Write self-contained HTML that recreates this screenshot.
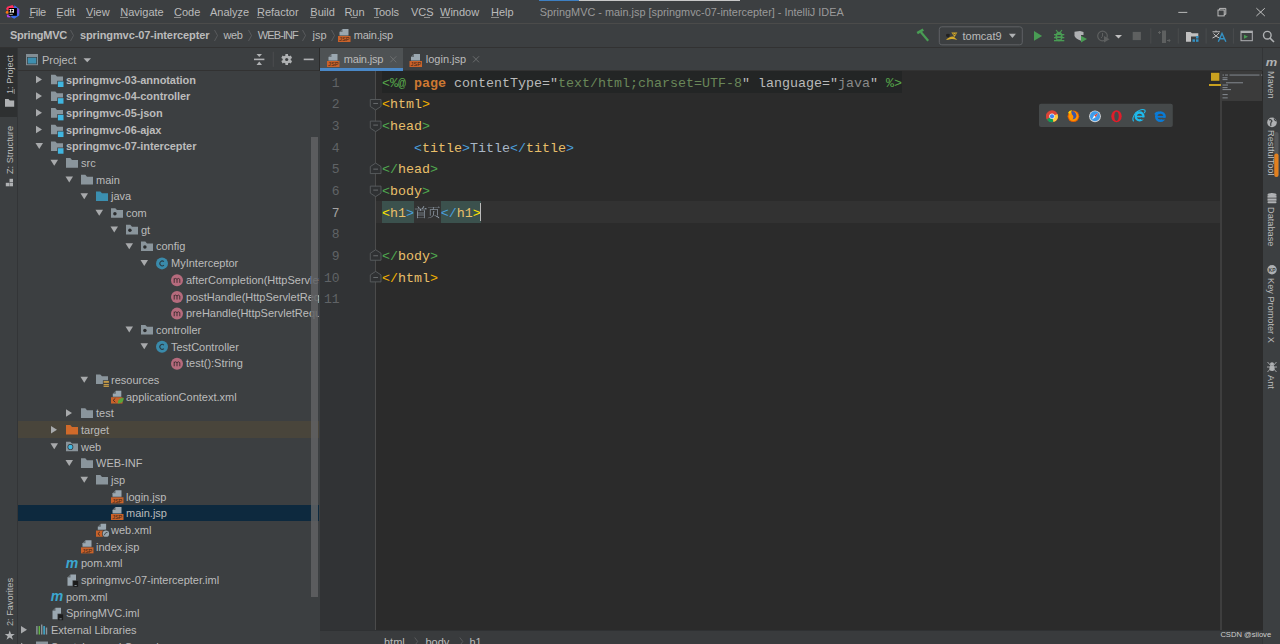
<!DOCTYPE html><html><head><meta charset="utf-8"><style>
*{margin:0;padding:0;box-sizing:border-box}
html,body{width:1280px;height:644px;overflow:hidden;background:#3c3f41;font-family:"Liberation Sans",sans-serif;font-size:11px;color:#bbbbbb}
.a{position:absolute;white-space:nowrap}
.t{position:absolute;white-space:nowrap;line-height:16.667px;height:16.667px;padding-top:0.6px}
.mono{font-family:"Liberation Mono",monospace;font-size:13.33px}
.cl{position:absolute;left:382px;white-space:pre;line-height:21.667px;height:21.667px;padding-top:1.8px;font-family:"Liberation Mono",monospace;font-size:13.33px}
.ln{position:absolute;left:320px;width:19.5px;text-align:right;line-height:21.667px;font-family:"Liberation Mono",monospace;font-size:13px;color:#606366;padding-top:1.6px}
.vt{position:absolute;white-space:nowrap;transform-origin:0 0;font-size:9.2px;line-height:10px;color:#bbbbbb}
</style></head><body>
<div class="a" style="left:0px;top:0px;width:1280px;height:23px;background:#3c3f41;"></div>
<div class="a" style="left:0px;top:23px;width:1280px;height:1px;background:#4b4b4a;"></div>
<div class="a" style="left:0px;top:24px;width:1280px;height:23px;background:#3c3f41;"></div>
<div class="a" style="left:0px;top:47px;width:1280px;height:1px;background:#323232;"></div>
<div class="a" style="left:0px;top:48px;width:18px;height:596px;background:#3c3f41;"></div>
<div class="a" style="left:0px;top:48px;width:17px;height:68.7px;background:#2e3031;"></div>
<div class="a" style="left:17px;top:48px;width:1px;height:596px;background:#333537;"></div>
<div class="a" style="left:18px;top:48px;width:301px;height:22px;background:#3c3f41;"></div>
<div class="a" style="left:18px;top:70px;width:301px;height:1px;background:#323232;"></div>
<div class="a" style="left:18px;top:71px;width:301px;height:573px;background:#3c3f41;"></div>
<div class="a" style="left:319px;top:48px;width:1px;height:23px;background:#2b2b2b;"></div>
<div class="a" style="left:320px;top:48px;width:943px;height:22px;background:#3c3f41;"></div>
<div class="a" style="left:320px;top:70px;width:943px;height:1px;background:#323232;"></div>
<div class="a" style="left:320px;top:48px;width:83px;height:20px;background:#4e5254;"></div>
<div class="a" style="left:320px;top:68px;width:83px;height:3px;background:#4a88c7;"></div>
<div class="a" style="left:320px;top:71px;width:56px;height:559px;background:#313335;"></div>
<div class="a" style="left:376px;top:71px;width:887px;height:559px;background:#2b2b2b;"></div>
<div class="a" style="left:375px;top:71px;width:1px;height:559px;background:#4b4b4b;"></div>
<div class="a" style="left:376px;top:201px;width:844.5px;height:21.667px;background:#323232;"></div>
<div class="a" style="left:382px;top:71px;width:520px;height:21.667px;background:#232525;"></div>
<div class="a" style="left:1220.4px;top:71px;width:1.3px;height:559px;background:#3e3e3e;"></div>
<div class="a" style="left:1222px;top:71px;width:40px;height:29.5px;background:#3b3b3b;"></div>
<div class="a" style="left:320px;top:630px;width:943px;height:14px;background:#393b3d;"></div>
<div class="a" style="left:320px;top:630px;width:943px;height:1px;background:#2f3133;"></div>
<div class="a" style="left:1263px;top:48px;width:17px;height:596px;background:#3c3f41;"></div>
<div class="a" style="left:1262px;top:48px;width:1px;height:23px;background:#333537;"></div>
<div class="a" style="left:1262px;top:630px;width:1px;height:14px;background:#333537;"></div>
<div class="a" style="left:18px;top:421.3469999999999px;width:301px;height:16.667px;background:#49453b;"></div>
<div class="a" style="left:18px;top:504.747px;width:301px;height:16.667px;background:#0d293e;"></div>
<div class="a" style="left:539px;top:0px;width:40px;height:1.2px;background:#3d7fc2;"></div>
<div class="a" style="left:579px;top:0px;width:161px;height:1.2px;background:#c8c8c8;"></div>
<div class="a" style="left:29.5px;top:0;height:23px;line-height:23px;padding-top:1px;letter-spacing:-0.35px">File</div>
<div class="a" style="left:56.3px;top:0;height:23px;line-height:23px;padding-top:1px;letter-spacing:0px">Edit</div>
<div class="a" style="left:86px;top:0;height:23px;line-height:23px;padding-top:1px;letter-spacing:0px">View</div>
<div class="a" style="left:120.3px;top:0;height:23px;line-height:23px;padding-top:1px;letter-spacing:0px">Navigate</div>
<div class="a" style="left:174px;top:0;height:23px;line-height:23px;padding-top:1px;letter-spacing:0px">Code</div>
<div class="a" style="left:210px;top:0;height:23px;line-height:23px;padding-top:1px;letter-spacing:0px">Analyze</div>
<div class="a" style="left:257px;top:0;height:23px;line-height:23px;padding-top:1px;letter-spacing:0px">Refactor</div>
<div class="a" style="left:310.3px;top:0;height:23px;line-height:23px;padding-top:1px;letter-spacing:0px">Build</div>
<div class="a" style="left:344.4px;top:0;height:23px;line-height:23px;padding-top:1px;letter-spacing:0px">Run</div>
<div class="a" style="left:373.4px;top:0;height:23px;line-height:23px;padding-top:1px;letter-spacing:0px">Tools</div>
<div class="a" style="left:411px;top:0;height:23px;line-height:23px;padding-top:1px;letter-spacing:0px">VCS</div>
<div class="a" style="left:440px;top:0;height:23px;line-height:23px;padding-top:1px;letter-spacing:0px">Window</div>
<div class="a" style="left:491px;top:0;height:23px;line-height:23px;padding-top:1px;letter-spacing:0px">Help</div>
<div class="a" style="left:539.7px;top:0;height:23px;line-height:23px;padding-top:1px;color:#9a9a9a;font-size:10.88px">SpringMVC - main.jsp [springmvc-07-intercepter] - IntelliJ IDEA</div>
<div class="a" style="left:29px;top:17px;width:5px;height:1px;background:#8e8e8e;"></div>
<div class="a" style="left:56.6px;top:17px;width:4.699999999999996px;height:1px;background:#8e8e8e;"></div>
<div class="a" style="left:86px;top:17px;width:7px;height:1px;background:#8e8e8e;"></div>
<div class="a" style="left:120.3px;top:17px;width:7.5px;height:1px;background:#8e8e8e;"></div>
<div class="a" style="left:173.9px;top:17px;width:7.099999999999994px;height:1px;background:#8e8e8e;"></div>
<div class="a" style="left:237.5px;top:17px;width:3.9000000000000057px;height:1px;background:#8e8e8e;"></div>
<div class="a" style="left:257px;top:17px;width:7px;height:1px;background:#8e8e8e;"></div>
<div class="a" style="left:310.3px;top:17px;width:6.0px;height:1px;background:#8e8e8e;"></div>
<div class="a" style="left:351px;top:17px;width:5.600000000000023px;height:1px;background:#8e8e8e;"></div>
<div class="a" style="left:373.5px;top:17px;width:5.5px;height:1px;background:#8e8e8e;"></div>
<div class="a" style="left:424px;top:17px;width:5.800000000000011px;height:1px;background:#8e8e8e;"></div>
<div class="a" style="left:440px;top:17px;width:10.399999999999977px;height:1px;background:#8e8e8e;"></div>
<div class="a" style="left:491px;top:17px;width:8px;height:1px;background:#8e8e8e;"></div>
<div class="a" style="left:10px;top:24px;height:23px;line-height:23px;letter-spacing:-0.25px;font-weight:bold;">SpringMVC</div>
<div class="a" style="left:80px;top:24px;height:23px;line-height:23px;letter-spacing:-0.11px;font-weight:bold;">springmvc-07-intercepter</div>
<div class="a" style="left:223.4px;top:24px;height:23px;line-height:23px;letter-spacing:-0.3px;">web</div>
<div class="a" style="left:257.8px;top:24px;height:23px;line-height:23px;letter-spacing:-0.9px;">WEB-INF</div>
<div class="a" style="left:312.5px;top:24px;height:23px;line-height:23px;letter-spacing:0px;">jsp</div>
<div class="a" style="left:353.8px;top:24px;height:23px;line-height:23px;letter-spacing:-0.25px;">main.jsp</div>
<div class="a" style="left:42px;top:48.5px;height:22px;line-height:22px">Project</div>
<div class="a" style="left:343.75px;top:49.3px;height:20px;line-height:20px;letter-spacing:-0.2px">main.jsp</div>
<div class="a" style="left:425.8px;top:49.3px;height:20px;line-height:20px">login.jsp</div>
<div class="a" style="left:18px;top:71px;width:301px;height:573px;overflow:hidden">
<div class="t" style="left:48px;top:0.07px;font-weight:bold;letter-spacing:-0.07px;">springmvc-03-annotation</div>
<div class="t" style="left:48px;top:16.75px;font-weight:bold;letter-spacing:-0.07px;">springmvc-04-controller</div>
<div class="t" style="left:48px;top:33.43px;font-weight:bold;letter-spacing:-0.07px;">springmvc-05-json</div>
<div class="t" style="left:48px;top:50.11px;font-weight:bold;letter-spacing:-0.07px;">springmvc-06-ajax</div>
<div class="t" style="left:48px;top:66.79px;font-weight:bold;letter-spacing:-0.07px;">springmvc-07-intercepter</div>
<div class="t" style="left:63px;top:83.47px;">src</div>
<div class="t" style="left:78px;top:100.15px;">main</div>
<div class="t" style="left:93px;top:116.83px;">java</div>
<div class="t" style="left:108px;top:133.51px;">com</div>
<div class="t" style="left:123px;top:150.19px;">gt</div>
<div class="t" style="left:138px;top:166.87px;">config</div>
<div class="t" style="left:153px;top:183.55px;">MyInterceptor</div>
<div class="t" style="left:168px;top:200.23px;">afterCompletion(HttpServletRequest, HttpServletResponse, Object, Exception):void</div>
<div class="t" style="left:168px;top:216.91px;">postHandle(HttpServletRequest, HttpServletResponse, Object, ModelAndView):void</div>
<div class="t" style="left:168px;top:233.59px;">preHandle(HttpServletRequest, HttpServletResponse, Object):boolean</div>
<div class="t" style="left:138px;top:250.27px;">controller</div>
<div class="t" style="left:153px;top:266.95px;">TestController</div>
<div class="t" style="left:168px;top:283.63px;">test():String</div>
<div class="t" style="left:93px;top:300.31px;">resources</div>
<div class="t" style="left:108px;top:316.99px;">applicationContext.xml</div>
<div class="t" style="left:78px;top:333.67px;">test</div>
<div class="t" style="left:63px;top:350.35px;">target</div>
<div class="t" style="left:63px;top:367.03px;">web</div>
<div class="t" style="left:78px;top:383.71px;">WEB-INF</div>
<div class="t" style="left:93px;top:400.39px;">jsp</div>
<div class="t" style="left:108px;top:417.07px;">login.jsp</div>
<div class="t" style="left:108px;top:433.75px;">main.jsp</div>
<div class="t" style="left:93px;top:450.43px;">web.xml</div>
<div class="t" style="left:78px;top:467.11px;">index.jsp</div>
<div class="t" style="left:63px;top:483.79px;">pom.xml</div>
<div class="t" style="left:63px;top:500.47px;">springmvc-07-intercepter.iml</div>
<div class="t" style="left:48px;top:517.15px;">pom.xml</div>
<div class="t" style="left:48px;top:533.83px;">SpringMVC.iml</div>
<div class="t" style="left:33px;top:550.51px;">External Libraries</div>
<div class="t" style="left:33px;top:567.19px;">Scratches and Consoles</div>
</div>
<div class="a" style="left:311px;top:136.8px;width:7px;height:460px;background:rgba(96,98,100,0.85);"></div>
<div class="ln" style="top:71.00px;color:#606366">1</div>
<div class="cl" style="top:71.00px"><span style="color:#57a64a;">&lt;%@</span> <span style="color:#cc7832;font-weight:bold">page</span> <span style="color:#bababa;">contentType</span><span style="color:#bababa;">="</span><span style="color:#6a8759;">text/html;charset=UTF-8</span><span style="color:#bababa;">"</span> <span style="color:#bababa;">language</span><span style="color:#bababa;">="</span><span style="color:#8a8a8a;">java</span><span style="color:#bababa;">"</span> <span style="color:#57a64a;">%&gt;</span></div>
<div class="ln" style="top:92.67px;color:#606366">2</div>
<div class="cl" style="top:92.67px"><span style="color:#f0b000;">&lt;</span><span style="color:#e8bf6a;">html</span><span style="color:#f0b000;">&gt;</span></div>
<div class="ln" style="top:114.33px;color:#606366">3</div>
<div class="cl" style="top:114.33px"><span style="color:#4fa84f;">&lt;</span><span style="color:#e8bf6a;">head</span><span style="color:#4fa84f;">&gt;</span></div>
<div class="ln" style="top:136.00px;color:#606366">4</div>
<div class="cl" style="top:136.00px">    <span style="color:#4a9eda;">&lt;</span><span style="color:#e8bf6a;">title</span><span style="color:#4a9eda;">&gt;</span><span style="color:#a9b7c6;">Title</span><span style="color:#4a9eda;">&lt;/</span><span style="color:#e8bf6a;">title</span><span style="color:#4a9eda;">&gt;</span></div>
<div class="ln" style="top:157.67px;color:#606366">5</div>
<div class="cl" style="top:157.67px"><span style="color:#4fa84f;">&lt;/</span><span style="color:#e8bf6a;">head</span><span style="color:#4fa84f;">&gt;</span></div>
<div class="ln" style="top:179.34px;color:#606366">6</div>
<div class="cl" style="top:179.34px"><span style="color:#4fa84f;">&lt;</span><span style="color:#e8bf6a;">body</span><span style="color:#4fa84f;">&gt;</span></div>
<div class="ln" style="top:201.00px;color:#a4a3a3">7</div>
<div class="a" style="left:382px;top:201.002px;width:32px;height:21.667px;background:#3b514d;"></div>
<div class="a" style="left:440.8px;top:201.002px;width:40px;height:21.667px;background:#3b514d;"></div>
<div class="cl" style="top:201.00px"><span style="color:#ffe500;">&lt;</span><span style="color:#e8bf6a;">h1</span><span style="color:#4a9eda;">&gt;</span></div>
<div class="cl" style="left:440.8px;top:201.00px"><span style="color:#4a9eda;">&lt;/</span><span style="color:#e8bf6a;">h1</span><span style="color:#ffe500;">&gt;</span></div>
<div class="a" style="left:480.3px;top:203.002px;width:1.2px;height:18px;background:#bbbbbb;"></div>
<div class="ln" style="top:222.67px;color:#606366">8</div>
<div class="ln" style="top:244.34px;color:#606366">9</div>
<div class="cl" style="top:244.34px"><span style="color:#4fa84f;">&lt;/</span><span style="color:#e8bf6a;">body</span><span style="color:#4fa84f;">&gt;</span></div>
<div class="ln" style="top:266.00px;color:#606366">10</div>
<div class="cl" style="top:266.00px"><span style="color:#f0b000;">&lt;/</span><span style="color:#e8bf6a;">html</span><span style="color:#f0b000;">&gt;</span></div>
<div class="ln" style="top:287.67px;color:#606366">11</div>
<div class="a" style="left:384px;top:632.5px;height:14px;line-height:18px;color:#bbbbbb">html</div>
<div class="a" style="left:425.5px;top:632.5px;height:14px;line-height:18px;color:#bbbbbb">body</div>
<div class="a" style="left:469.5px;top:632.5px;height:14px;line-height:18px;color:#bbbbbb">h1</div>
<div class="a" style="left:1220.4px;top:630px;font-size:7.6px;line-height:9px;color:#cfcfcf">CSDN @siiove</div>
<div class="a" style="left:962.5px;top:25px;height:23px;line-height:23px">tomcat9</div>
<div class="vt" style="left:4.8px;top:93.5px;transform:rotate(-90deg)">1: Project</div>
<div class="vt" style="left:4.8px;top:173.8px;transform:rotate(-90deg)">Z: Structure</div>
<div class="vt" style="left:4.8px;top:626.1px;transform:rotate(-90deg)">2: Favorites</div>
<div class="vt" style="left:1275.6px;top:70.5px;transform:rotate(90deg)">Maven</div>
<div class="vt" style="left:1275.6px;top:129.8px;transform:rotate(90deg)">RestfulTool</div>
<div class="vt" style="left:1275.6px;top:206.8px;transform:rotate(90deg)">Database</div>
<div class="vt" style="left:1275.6px;top:278px;transform:rotate(90deg)">Key Promoter X</div>
<div class="vt" style="left:1275.6px;top:374.7px;transform:rotate(90deg)">Ant</div>
<svg class="a" style="left:0;top:0" width="1280" height="644" viewBox="0 0 1280 644">
<g>
<path d="M7.2,6.8 L12.5,5 L14.3,7.5 L13.5,9.5 L7.5,10.5 L6,9 Z" fill="#fe315d"/>
<path d="M14.5,5.2 L19.2,9 L19.2,15.5 L14.2,18.8 L11,17 L12.5,13 Z" fill="#3b6cf0"/>
<path d="M17,8 L19.2,9.5 L19.2,14 L17,13 Z" fill="#7b4fd6"/>
<circle cx="7.3" cy="12.3" r="1.5" fill="#f97a12"/>
<path d="M6.8,15 L9.5,14 L10.5,17.5 L7.3,17.2 Z" fill="#b345f1"/>
<rect x="8.7" y="8" width="8.2" height="7.8" fill="#000"/>
<g fill="#f0f0f0"><rect x="9.4" y="9" width="2.3" height="0.9"/><rect x="10.1" y="9" width="0.9" height="3.4"/><rect x="9.4" y="11.6" width="2.3" height="0.9"/><rect x="12" y="9" width="2" height="0.9"/><rect x="13.1" y="9" width="0.9" height="3.5"/><rect x="11.9" y="11.6" width="2.1" height="0.9"/><rect x="11.9" y="10.9" width="0.8" height="1.3"/></g>
<rect x="9.4" y="13.9" width="3.4" height="0.8" fill="#d0d0d0"/>
</g>
<rect x="1178.3" y="11.9" width="9" height="0.9" fill="#c8c8c8"/>
<rect x="1218" y="10" width="6.2" height="5.9" fill="none" stroke="#c8c8c8" stroke-width="0.9"/><path d="M1219.6,10 V8.4 H1225.8 V14.3 H1224.2" fill="none" stroke="#c8c8c8" stroke-width="0.9"/>
<path d="M1256.4,8.2 L1264.8,16 M1264.8,8.2 L1256.4,16" stroke="#c8c8c8" stroke-width="0.95"/>
<path d="M70.5,30 L73.5,35.5 L70.5,41" fill="none" stroke="#5f6163" stroke-width="0.8"/>
<path d="M214.5,30 L217.5,35.5 L214.5,41" fill="none" stroke="#5f6163" stroke-width="0.8"/>
<path d="M248.5,30 L251.5,35.5 L248.5,41" fill="none" stroke="#5f6163" stroke-width="0.8"/>
<path d="M302.5,30 L305.5,35.5 L302.5,41" fill="none" stroke="#5f6163" stroke-width="0.8"/>
<path d="M331.5,30 L334.5,35.5 L331.5,41" fill="none" stroke="#5f6163" stroke-width="0.8"/>
<path d="M414.7,637.5 L417.7,641.5 L414.7,645.5" fill="none" stroke="#5f6163" stroke-width="0.8"/>
<path d="M459.8,637.5 L462.8,641.5 L459.8,645.5" fill="none" stroke="#5f6163" stroke-width="0.8"/>
<path d="M342.5,29 H348.5 V35.6 H339.5 V32 Z" fill="#9aa7b0"/><path d="M342.5,29 V32 H339.5 Z" fill="#3c3f41" opacity="0.55"/>
<rect x="338" y="36" width="12.5" height="6" fill="#c9622a"/>
<text x="344.25" y="41.3" font-family="Liberation Sans" font-size="5.6" text-anchor="middle" fill="#3a2418">JSP</text>
<path d="M331.5,54 H337.5 V60.6 H328.5 V57 Z" fill="#9aa7b0"/><path d="M331.5,54 V57 H328.5 Z" fill="#3c3f41" opacity="0.55"/>
<rect x="327" y="61" width="12.5" height="6" fill="#c9622a"/>
<text x="333.25" y="66.3" font-family="Liberation Sans" font-size="5.6" text-anchor="middle" fill="#3a2418">JSP</text>
<path d="M414.0,54 H420.0 V60.6 H411.0 V57 Z" fill="#9aa7b0"/><path d="M414.0,54 V57 H411.0 Z" fill="#3c3f41" opacity="0.55"/>
<rect x="409.5" y="61" width="12.5" height="6" fill="#c9622a"/>
<text x="415.75" y="66.3" font-family="Liberation Sans" font-size="5.6" text-anchor="middle" fill="#3a2418">JSP</text>
<path d="M390.3,56.3 L396.3,62.3 M396.3,56.3 L390.3,62.3" stroke="#6e7072" stroke-width="0.9"/>
<path d="M473,56.3 L479,62.3 M479,56.3 L473,62.3" stroke="#6e7072" stroke-width="0.9"/>
<rect x="26" y="54" width="12" height="11.2" fill="#838e95"/><rect x="27" y="57" width="10" height="7.2" fill="#3c3f41"/><rect x="27.7" y="57.6" width="8.6" height="6" fill="#3e8fb0"/>
<path d="M83.5,58.3 L91,58.3 L87.25,62.3 Z" fill="#afb1b3"/>
<path d="M256.5,54 L262,54 L259.25,57 Z M256.5,64.9 L262,64.9 L259.25,61.4 Z" fill="#afb1b3"/><rect x="254" y="58.6" width="10.4" height="1.6" fill="#afb1b3"/>
<rect x="272.8" y="51.8" width="1" height="15" fill="#4b4d4f"/>
<g transform="translate(286.7,59.5)"><circle r="4" fill="#afb1b3"/>
<rect x="-1.3" y="-5.5" width="2.6" height="3" fill="#afb1b3" transform="rotate(0)"/>
<rect x="-1.3" y="-5.5" width="2.6" height="3" fill="#afb1b3" transform="rotate(60)"/>
<rect x="-1.3" y="-5.5" width="2.6" height="3" fill="#afb1b3" transform="rotate(120)"/>
<rect x="-1.3" y="-5.5" width="2.6" height="3" fill="#afb1b3" transform="rotate(180)"/>
<rect x="-1.3" y="-5.5" width="2.6" height="3" fill="#afb1b3" transform="rotate(240)"/>
<rect x="-1.3" y="-5.5" width="2.6" height="3" fill="#afb1b3" transform="rotate(300)"/>
<circle r="1.6" fill="#3c3f41"/></g>
<rect x="303.7" y="58.6" width="10" height="1.6" fill="#afb1b3"/>
<path d="M917.2,33.2 L923.3,29.6" stroke="#499c54" stroke-width="2.6" stroke-linecap="butt"/><path d="M920.8,32 L928.2,40.8" stroke="#499c54" stroke-width="2.2"/>
<rect x="939.3" y="26.8" width="83" height="18" rx="2.5" fill="none" stroke="#5e6164" stroke-width="1"/>
<path d="M946,34.5 Q948,33 950,34.5 L949,37.5 Q947,37.5 946,36 Z" fill="#222"/><path d="M946,40 Q949,36.2 953.5,36.5 L957.3,40 Q953,38.6 950,39.2 Q948,39.8 946,40 Z" fill="#d6ac2b"/><path d="M951.3,32.4 L957.4,32.4 L954.6,37 Z" fill="#d6ac2b"/><path d="M953,33.3 L954.5,35 L956,33.3" stroke="#333" stroke-width="0.7" fill="none"/>
<path d="M1008.9,33.8 L1015.9,33.8 L1012.4,38 Z" fill="#afb1b3"/>
<path d="M1034,31.1 L1042.1,36 L1034,40.8 Z" fill="#499c54"/>
<g fill="#499c54"><ellipse cx="1059" cy="36.5" rx="3.6" ry="4.8"/><rect x="1054" y="34" width="10.3" height="1.3"/><rect x="1054" y="37" width="10.3" height="1.3"/><rect x="1054" y="40" width="10.3" height="1.3"/><path d="M1056,30 L1058,32.5 M1062,30 L1060,32.5" stroke="#499c54" stroke-width="1.2"/></g><rect x="1057.3" y="35" width="3.4" height="1.3" fill="#3c3f41"/><rect x="1057.3" y="38" width="3.4" height="1.3" fill="#3c3f41"/>
<path d="M1074.5,31.8 L1080,31 L1083.5,32 L1083.5,35 L1081,35 L1081,40.8 Q1076,39 1074.5,36 Z" fill="#afb1b3"/><path d="M1081,35.8 L1087,39.1 L1081,42.4 Z" fill="#499c54"/>
<circle cx="1102.5" cy="36" r="4.8" fill="none" stroke="#5e6060" stroke-width="1.2"/><path d="M1102.5,33 V36.3 L1101,38" stroke="#5e6060" stroke-width="1" fill="none"/><path d="M1104,36 L1109.6,39.2 L1104,42.4 Z" fill="#5e6060"/>
<path d="M1115,35 L1122,35 L1118.5,38.5 Z" fill="#c0c0c0"/>
<rect x="1132.7" y="31.9" width="8.2" height="8.2" fill="#5e6060"/>
<rect x="1150.3" y="28.3" width="1" height="15.3" fill="#4a4c4e"/>
<rect x="1177.8" y="28.3" width="1" height="15.3" fill="#4a4c4e"/>
<rect x="1205.6" y="28.3" width="1" height="15.3" fill="#4a4c4e"/>
<rect x="1232.9" y="28.3" width="1" height="15.3" fill="#4a4c4e"/>
<rect x="1162" y="30.5" width="4" height="12.5" fill="#5e6060"/><path d="M1158,32.5 H1161 M1159.5,31 V34 M1167,40.5 H1170 L1168.8,39 M1170,40.5 L1168.8,42" stroke="#5e6060" stroke-width="1" fill="none"/>
<path d="M1186,31.9 H1190.5 L1192,33.3 H1198.3 V41.8 H1186 Z" fill="#c0c0c0"/><rect x="1191" y="36.5" width="8" height="6" fill="#3c3f41"/><g fill="#3592c4"><rect x="1196" y="36" width="2.5" height="2.5"/><rect x="1192.5" y="39.3" width="2.5" height="2.5"/><rect x="1196" y="39.3" width="2.5" height="2.5"/></g>
<path d="M1212.5,31.8 H1220 M1216,30.5 V31.8 M1213.5,33.5 Q1216,37 1219.5,38 M1219,33 Q1216,37 1212.5,38" stroke="#c0c0c0" stroke-width="1" fill="none"/>
<path d="M1218.3,41.8 L1222,33.5 L1225.9,41.8 M1219.8,38.8 H1224.3" stroke="#3592c4" stroke-width="1.4" fill="none"/>
<rect x="1241" y="31.2" width="11.3" height="9.5" fill="none" stroke="#afb1b3" stroke-width="1"/><rect x="1241" y="31.2" width="11.3" height="1.8" fill="#afb1b3"/><path d="M1244,34.8 L1248,36.8 L1244,38.8 Z" fill="#499c54"/>
<circle cx="1267.3" cy="35.2" r="3.8" fill="none" stroke="#afb1b3" stroke-width="1.4"/><path d="M1270,38 L1274,42" stroke="#afb1b3" stroke-width="1.6"/>
<rect x="13.8" y="89" width="0.9" height="5" fill="#8e8e8e"/>
<path d="M5,99 H8.5 L9.8,100.5 H14.2 V106.8 H5 Z" fill="#afb1b3"/>
<g fill="#afb1b3"><rect x="9.5" y="178.8" width="3.5" height="3.5"/><rect x="5.8" y="182.8" width="3.5" height="3.5"/><rect x="9.5" y="182.8" width="3.5" height="3.5"/></g>
<path d="M9.75,630.5 L11,634 L14.8,634 L11.8,636.2 L13,639.8 L9.75,637.6 L6.5,639.8 L7.7,636.2 L4.7,634 L8.5,634 Z" fill="#afb1b3"/>
<text x="1265.8" y="65.5" font-family="Liberation Sans" font-size="11.5" font-weight="bold" font-style="italic" fill="#afb1b3" textLength="11.5" lengthAdjust="spacingAndGlyphs">m</text>
<circle cx="1272" cy="122.4" r="4.8" fill="#afb1b3"/><path d="M1269,120 Q1271,119 1272,121 Q1270,123 1271,126 M1274,118.5 Q1275,121 1276.5,121" stroke="#3c3f41" stroke-width="1.1" fill="none"/>
<rect x="1274.3" y="132" width="4.2" height="45" rx="2" fill="#555759"/><rect x="1274.3" y="153.4" width="4.2" height="23.6" rx="2" fill="#e1801f"/>
<g fill="#afb1b3"><ellipse cx="1272" cy="194.5" rx="4.5" ry="1.6"/><rect x="1267.5" y="195.5" width="9" height="2.2"/><rect x="1267.5" y="198.5" width="9" height="2.2"/><rect x="1267.5" y="201.3" width="9" height="1.9" rx="0.9"/></g>
<circle cx="1272" cy="269.8" r="4.7" fill="#afb1b3"/><text x="1272" y="272" font-family="Liberation Sans" font-size="5" font-weight="bold" text-anchor="middle" fill="#3c3f41">KP</text>
<g fill="#afb1b3"><ellipse cx="1272" cy="364" rx="2" ry="1.8"/><ellipse cx="1272" cy="368.3" rx="2.6" ry="2.8"/><path d="M1267.5,362 L1276.5,372 M1276.5,362 L1267.5,372 M1267,367 H1277" stroke="#afb1b3" stroke-width="0.9"/></g>
<path d="M370.3,99.467 H381.0 V106.467 L375.65000000000003,109.967 L370.3,106.467 Z" fill="#2f3133" stroke="#5a5d60" stroke-width="0.9"/><rect x="373.3" y="102.967" width="4.7" height="0.9" fill="#6e7173"/>
<path d="M370.3,121.134 H381.0 V128.13400000000001 L375.65000000000003,131.63400000000001 L370.3,128.13400000000001 Z" fill="#2f3133" stroke="#5a5d60" stroke-width="0.9"/><rect x="373.3" y="124.634" width="4.7" height="0.9" fill="#6e7173"/>
<path d="M370.3,173.568 H381.0 V166.568 L375.65000000000003,163.068 L370.3,166.568 Z" fill="#2f3133" stroke="#5a5d60" stroke-width="0.9"/><rect x="373.3" y="168.668" width="4.7" height="0.9" fill="#6e7173"/>
<path d="M370.3,186.13500000000002 H381.0 V193.13500000000002 L375.65000000000003,196.63500000000002 L370.3,193.13500000000002 Z" fill="#2f3133" stroke="#5a5d60" stroke-width="0.9"/><rect x="373.3" y="189.63500000000002" width="4.7" height="0.9" fill="#6e7173"/>
<path d="M370.3,260.236 H381.0 V253.23600000000002 L375.65000000000003,249.73600000000002 L370.3,253.23600000000002 Z" fill="#2f3133" stroke="#5a5d60" stroke-width="0.9"/><rect x="373.3" y="255.336" width="4.7" height="0.9" fill="#6e7173"/>
<path d="M370.3,281.9030000000001 H381.0 V274.9030000000001 L375.65000000000003,271.4030000000001 L370.3,274.9030000000001 Z" fill="#2f3133" stroke="#5a5d60" stroke-width="0.9"/><rect x="373.3" y="277.0030000000001" width="4.7" height="0.9" fill="#6e7173"/>
<rect x="1211" y="72.8" width="8.4" height="8" fill="#c9a11f"/>
<rect x="1209" y="84" width="12" height="2" fill="#c9a11f"/>
<rect x="1222.5" y="74.5" width="1.5" height="1.1" fill="#7d8288"/>
<rect x="1225" y="74.5" width="3" height="1.1" fill="#7d8288"/>
<rect x="1229.5" y="74.5" width="30" height="1.1" fill="#7d8288"/>
<rect x="1261" y="74.5" width="1.2" height="1.1" fill="#7d8288"/>
<rect x="1222.5" y="77.2" width="5" height="1.1" fill="#7d8288"/>
<rect x="1222.5" y="79" width="5" height="1.1" fill="#7d8288"/>
<rect x="1226" y="82.2" width="17" height="1.1" fill="#7d8288"/>
<rect x="1222.5" y="84.5" width="5.5" height="1.1" fill="#7d8288"/>
<rect x="1222.5" y="87" width="5" height="1.1" fill="#7d8288"/>
<rect x="1222.5" y="89" width="8.5" height="1.1" fill="#7d8288"/>
<rect x="1222.5" y="94" width="5.2" height="1.1" fill="#7d8288"/>
<rect x="1222.5" y="97.3" width="5.2" height="1.1" fill="#7d8288"/>
<rect x="1039" y="103.8" width="133.8" height="23.1" rx="2" fill="#45494a"/>
<circle cx="1052" cy="116.3" r="6" fill="#db4437"/><path d="M1052,116.3 L1046.8,119.3 A6,6 0 0 1 1046.8,113.3 Z" fill="#db4437"/><path d="M1052,116.3 L1046.8,119.3 A6,6 0 0 0 1053.5,122.1 Z" fill="#0f9d58"/><path d="M1052,116.3 L1053.5,122.1 A6,6 0 0 0 1057.5,113.89999999999999 Z" fill="#ffcd40"/><circle cx="1052" cy="116.3" r="2.7" fill="#f1f1f1"/><circle cx="1052" cy="116.3" r="2.1" fill="#4285f4"/>
<circle cx="1073.4" cy="116.3" r="5.8" fill="#e66000"/><circle cx="1073.4" cy="116.3" r="4.8" fill="#ff9500"/><path d="M1071,111 Q1076,111 1076.5,116 Q1076,119 1072.5,119.5 Q1074.5,116.5 1072,114.5 Z" fill="#3a55a8"/><path d="M1068,113 Q1069,110 1072,110.2 L1070,114 Z" fill="#ffcb00"/>
<circle cx="1095" cy="116.3" r="5.9" fill="#d0d4d8"/><circle cx="1095" cy="116.3" r="5" fill="#3d9ae8"/><path d="M1098,113 L1095.8,117 L1092,119.5 L1094.2,115.6 Z" fill="#fff"/><path d="M1098,113 L1094.2,115.6 L1095.8,117 Z" fill="#e63b2e"/>
<ellipse cx="1116.5" cy="116.3" rx="5.2" ry="6" fill="#e11d2a"/><ellipse cx="1116.5" cy="116.3" rx="2.2" ry="4.6" fill="#45494a"/>
<circle cx="1139.6" cy="116.4" r="3.9" stroke="#1ebbee" stroke-width="2.3" fill="none"/><rect x="1135.6" y="115.7" width="8.2" height="1.7" fill="#1ebbee"/><path d="M1141,117.5 L1146,117.5 L1146,119.6 L1141,119.6 Z" fill="#45494a"/><path d="M1133.6,121.3 Q1131.5,118.5 1135.5,113 Q1141.5,108 1145,110.2 Q1145.8,111.5 1144,113" stroke="#1ebbee" stroke-width="1.1" fill="none"/>
<circle cx="1160.4" cy="116.6" r="4.2" stroke="#0a7bd6" stroke-width="2.5" fill="none"/><rect x="1156.2" y="115.9" width="8.5" height="1.8" fill="#0a7bd6"/><path d="M1162,117.9 L1166.5,117.9 L1166.5,119.6 L1162,119.6 Z" fill="#45494a"/><path d="M1154.9,114.5 Q1156.5,112 1159,112.5" stroke="#0a7bd6" stroke-width="1.6" fill="none"/>
<path d="M36,75.65 L42,79.4 L36,83.15 Z" fill="#a8aaac"/>
<path d="M51,74.7 H55.3 L57,76.60000000000001 H63 V84.30000000000001 H51 Z" fill="#8a959c"/>
<rect x="57.2" y="80.80000000000001" width="7" height="7" fill="#3c3f41"/>
<rect x="57.9" y="81.5" width="5.6" height="5.5" fill="#40b6e0"/>
<path d="M36,92.33000000000001 L42,96.08000000000001 L36,99.83000000000001 Z" fill="#a8aaac"/>
<path d="M51,91.38000000000001 H55.3 L57,93.28000000000002 H63 V100.98000000000002 H51 Z" fill="#8a959c"/>
<rect x="57.2" y="97.48000000000002" width="7" height="7" fill="#3c3f41"/>
<rect x="57.9" y="98.18" width="5.6" height="5.5" fill="#40b6e0"/>
<path d="M36,109.01 L42,112.76 L36,116.51 Z" fill="#a8aaac"/>
<path d="M51,108.06 H55.3 L57,109.96000000000001 H63 V117.66000000000001 H51 Z" fill="#8a959c"/>
<rect x="57.2" y="114.16000000000001" width="7" height="7" fill="#3c3f41"/>
<rect x="57.9" y="114.86" width="5.6" height="5.5" fill="#40b6e0"/>
<path d="M36,125.69 L42,129.44 L36,133.19 Z" fill="#a8aaac"/>
<path d="M51,124.74 H55.3 L57,126.64 H63 V134.34 H51 Z" fill="#8a959c"/>
<rect x="57.2" y="130.84" width="7" height="7" fill="#3c3f41"/>
<rect x="57.9" y="131.54" width="5.6" height="5.5" fill="#40b6e0"/>
<path d="M35.5,143.12 L43,143.12 L39.25,149.12 Z" fill="#a8aaac"/>
<path d="M51,141.42000000000002 H55.3 L57,143.32 H63 V151.02 H51 Z" fill="#8a959c"/>
<rect x="57.2" y="147.52" width="7" height="7" fill="#3c3f41"/>
<rect x="57.9" y="148.22" width="5.6" height="5.5" fill="#40b6e0"/>
<path d="M50.5,159.8 L58,159.8 L54.25,165.8 Z" fill="#a8aaac"/>
<path d="M66,158.10000000000002 H70.3 L72,160.0 H78 V167.70000000000002 H66 Z" fill="#8a959c"/>
<path d="M65.5,176.48000000000002 L73,176.48000000000002 L69.25,182.48000000000002 Z" fill="#a8aaac"/>
<path d="M81,174.78000000000003 H85.3 L87,176.68 H93 V184.38000000000002 H81 Z" fill="#8a959c"/>
<path d="M80.5,193.16 L88,193.16 L84.25,199.16 Z" fill="#a8aaac"/>
<path d="M96,191.46 H100.3 L102,193.35999999999999 H108 V201.06 H96 Z" fill="#3b8fb0"/>
<path d="M95.5,209.84 L103,209.84 L99.25,215.84 Z" fill="#a8aaac"/>
<path d="M111,208.14000000000001 H115.3 L117,210.04 H123 V217.74 H111 Z" fill="#8a959c"/>
<circle cx="114.9" cy="213.64000000000001" r="1.75" fill="#2b2d2f"/>
<path d="M110.5,226.52 L118,226.52 L114.25,232.52 Z" fill="#a8aaac"/>
<path d="M126,224.82000000000002 H130.3 L132,226.72 H138 V234.42000000000002 H126 Z" fill="#8a959c"/>
<circle cx="129.9" cy="230.32000000000002" r="1.75" fill="#2b2d2f"/>
<path d="M125.5,243.20000000000002 L133,243.20000000000002 L129.25,249.20000000000002 Z" fill="#a8aaac"/>
<path d="M141,241.50000000000003 H145.3 L147,243.4 H153 V251.10000000000002 H141 Z" fill="#8a959c"/>
<circle cx="144.9" cy="247.00000000000003" r="1.75" fill="#2b2d2f"/>
<path d="M140.5,259.88 L148,259.88 L144.25,265.88 Z" fill="#a8aaac"/>
<circle cx="162" cy="263.38" r="6" fill="#3a8aaa"/>
<path d="M163.9,261.68 A2.4,2.4 0 1 0 163.9,265.18" stroke="#2a3a42" stroke-width="1.05" fill="none"/>
<circle cx="177" cy="280.26" r="6" fill="#b66b7d"/>
<path d="M174.2,282.86 V278.26 M174.2,279.26 Q175.6,277.56 177,279.26 V282.86 M177,279.26 Q178.4,277.56 179.8,279.26 V282.86" stroke="#3e2c31" stroke-width="0.95" fill="none"/>
<circle cx="177" cy="296.94" r="6" fill="#b66b7d"/>
<path d="M174.2,299.54 V294.94 M174.2,295.94 Q175.6,294.24 177,295.94 V299.54 M177,295.94 Q178.4,294.24 179.8,295.94 V299.54" stroke="#3e2c31" stroke-width="0.95" fill="none"/>
<circle cx="177" cy="313.61999999999995" r="6" fill="#b66b7d"/>
<path d="M174.2,316.21999999999997 V311.61999999999995 M174.2,312.61999999999995 Q175.6,310.91999999999996 177,312.61999999999995 V316.21999999999997 M177,312.61999999999995 Q178.4,310.91999999999996 179.8,312.61999999999995 V316.21999999999997" stroke="#3e2c31" stroke-width="0.95" fill="none"/>
<path d="M125.5,326.6 L133,326.6 L129.25,332.6 Z" fill="#a8aaac"/>
<path d="M141,324.90000000000003 H145.3 L147,326.8 H153 V334.5 H141 Z" fill="#8a959c"/>
<circle cx="144.9" cy="330.40000000000003" r="1.75" fill="#2b2d2f"/>
<path d="M140.5,343.28 L148,343.28 L144.25,349.28 Z" fill="#a8aaac"/>
<circle cx="162" cy="346.78" r="6" fill="#3a8aaa"/>
<path d="M163.9,345.08 A2.4,2.4 0 1 0 163.9,348.58" stroke="#2a3a42" stroke-width="1.05" fill="none"/>
<circle cx="177" cy="363.66" r="6" fill="#b66b7d"/>
<path d="M174.2,366.26000000000005 V361.66 M174.2,362.66 Q175.6,360.96000000000004 177,362.66 V366.26000000000005 M177,362.66 Q178.4,360.96000000000004 179.8,362.66 V366.26000000000005" stroke="#3e2c31" stroke-width="0.95" fill="none"/>
<path d="M80.5,376.64 L88,376.64 L84.25,382.64 Z" fill="#a8aaac"/>
<path d="M96,374.44 H100.3 L102,376.34 H108 V384.03999999999996 H96 Z" fill="#8a959c"/>
<rect x="102.9" y="380.24" width="6.6" height="7.4" fill="#3c3f41"/>
<rect x="103.6" y="380.94" width="5.3" height="1.9" fill="#c49a46"/>
<rect x="103.6" y="383.94" width="5.3" height="1.3" fill="#c49a46"/>
<rect x="103.6" y="385.74" width="5.3" height="1.2" fill="#c49a46"/>
<path d="M115.8,390.72 H121.3 V396.72 H112.8 V393.72 Z" fill="#9aa7b0"/><path d="M115.8,390.72 V393.72 H112.8 Z" fill="#3c3f41" opacity="0.6"/>
<rect x="111" y="397.22" width="11.5" height="6.3" fill="#c9622a"/>
<path d="M115.3,398.4200000000001 L113.2,400.32000000000005 L115.3,402.22" stroke="#3c2a20" stroke-width="0.9" fill="none"/>
<path d="M117.8,403.52000000000004 Q117.3,398.32000000000005 123.8,397.82000000000005 Q124,403.52000000000004 117.8,403.52000000000004 Z" fill="#5aa43a"/>
<path d="M66,409.25 L72,413.0 L66,416.75 Z" fill="#a8aaac"/>
<path d="M81,408.3 H85.3 L87,410.2 H93 V417.9 H81 Z" fill="#8a959c"/>
<path d="M51,425.92999999999995 L57,429.67999999999995 L51,433.42999999999995 Z" fill="#a8aaac"/>
<path d="M66,424.97999999999996 H70.3 L72,426.87999999999994 H78 V434.5799999999999 H66 Z" fill="#d06a2a"/>
<path d="M50.5,443.36 L58,443.36 L54.25,449.36 Z" fill="#a8aaac"/>
<path d="M66,441.66 H70.3 L72,443.56 H78 V451.26 H66 Z" fill="#8a959c"/>
<circle cx="70.4" cy="446.96000000000004" r="2.9" fill="#2e3133"/><circle cx="70.4" cy="446.96000000000004" r="2.2" fill="#40b6e0"/>
<path d="M65.5,460.03999999999996 L73,460.03999999999996 L69.25,466.03999999999996 Z" fill="#a8aaac"/>
<path d="M81,458.34 H85.3 L87,460.23999999999995 H93 V467.93999999999994 H81 Z" fill="#8a959c"/>
<path d="M80.5,476.72 L88,476.72 L84.25,482.72 Z" fill="#a8aaac"/>
<path d="M96,475.02000000000004 H100.3 L102,476.92 H108 V484.62 H96 Z" fill="#8a959c"/>
<path d="M115.5,490.29999999999995 H121.5 V496.79999999999995 H112.5 V493.29999999999995 Z" fill="#9aa7b0"/><path d="M115.5,490.29999999999995 V493.29999999999995 H112.5 Z" fill="#3c3f41" opacity="0.6"/>
<rect x="111" y="497.29999999999995" width="12.5" height="6" fill="#c9622a"/>
<text x="117.25" y="502.59999999999997" font-family="Liberation Sans" font-size="5.5" text-anchor="middle" fill="#3a2418">JSP</text>
<path d="M115.5,506.98 H121.5 V513.48 H112.5 V509.98 Z" fill="#9aa7b0"/><path d="M115.5,506.98 V509.98 H112.5 Z" fill="#3c3f41" opacity="0.6"/>
<rect x="111" y="513.98" width="12.5" height="6" fill="#c9622a"/>
<text x="117.25" y="519.2800000000001" font-family="Liberation Sans" font-size="5.5" text-anchor="middle" fill="#3a2418">JSP</text>
<path d="M100.8,523.86 H106.1 V529.86 H97.8 V526.86 Z" fill="#9aa7b0"/><path d="M100.8,523.86 V526.86 H97.8 Z" fill="#3c3f41" opacity="0.6"/>
<rect x="96" y="530.56" width="7.2" height="6.2" fill="#c9622a"/>
<path d="M100,531.76 L97.9,533.66 L100,535.56" stroke="#3c2a20" stroke-width="0.9" fill="none"/>
<circle cx="105.9" cy="533.66" r="3.9" fill="#3c3f41"/><circle cx="105.9" cy="533.66" r="3.2" fill="#9aa7b0"/><path d="M104.2,535.26 Q105.5,531.76 107.5,532.36" stroke="#3c3f41" stroke-width="0.9" fill="none"/>
<path d="M85.5,540.3399999999999 H91.5 V546.8399999999999 H82.5 V543.3399999999999 Z" fill="#9aa7b0"/><path d="M85.5,540.3399999999999 V543.3399999999999 H82.5 Z" fill="#3c3f41" opacity="0.6"/>
<rect x="81" y="547.3399999999999" width="12.5" height="6" fill="#c9622a"/>
<text x="87.25" y="552.64" font-family="Liberation Sans" font-size="5.5" text-anchor="middle" fill="#3a2418">JSP</text>
<text x="65.7" y="567.92" font-family="Liberation Sans" font-size="15" font-weight="bold" font-style="italic" fill="#3ba6cf" textLength="12.5" lengthAdjust="spacingAndGlyphs">m</text>
<path d="M70.5,574.4 H76.0 V585.8 H67.5 V577.4 Z" fill="#9aa7b0"/><path d="M70.5,574.4 V577.4 H67.5 Z" fill="#3c3f41" opacity="0.6"/>
<rect x="72.5" y="580.3" width="6.2" height="7.2" fill="#3c3f41"/><rect x="73.2" y="581.0" width="4.9" height="5.8" fill="#1b1b1b"/><rect x="74.5" y="585.0999999999999" width="2.2" height="0.8" fill="#9aa7b0"/>
<text x="50.7" y="601.28" font-family="Liberation Sans" font-size="15" font-weight="bold" font-style="italic" fill="#3ba6cf" textLength="12.5" lengthAdjust="spacingAndGlyphs">m</text>
<path d="M55.5,607.76 H61.0 V619.16 H52.5 V610.76 Z" fill="#9aa7b0"/><path d="M55.5,607.76 V610.76 H52.5 Z" fill="#3c3f41" opacity="0.6"/>
<rect x="57.5" y="613.66" width="6.2" height="7.2" fill="#3c3f41"/><rect x="58.2" y="614.36" width="4.9" height="5.8" fill="#1b1b1b"/><rect x="59.5" y="618.4599999999999" width="2.2" height="0.8" fill="#9aa7b0"/>
<path d="M21,626.0899999999999 L27,629.8399999999999 L21,633.5899999999999 Z" fill="#a8aaac"/>
<rect x="36.2" y="626.04" width="1.4" height="8.5" fill="#8a959c"/>
<rect x="38.6" y="626.04" width="1.4" height="8.5" fill="#62b543"/>
<rect x="41.0" y="624.54" width="1.4" height="10" fill="#8a959c"/>
<rect x="43.400000000000006" y="626.04" width="1.4" height="8.5" fill="#40b6e0"/>
<rect x="45.800000000000004" y="627.54" width="1.4" height="7" fill="#8a959c"/>
<path d="M21,642.77 L27,646.52 L21,650.27 Z" fill="#a8aaac"/>
<rect x="36" y="641.52" width="12" height="10" fill="#8a959c"/>
<g fill="#a9b7c6"><path transform="translate(414.2,217.3) scale(0.0132,-0.0132)" d="M258 828 246 821C289 782 339 715 350 663C405 624 444 747 258 828ZM211 500V-71H219C238 -71 254 -60 254 -54V-4H741V-67H747C762 -67 784 -54 785 -48V461C805 465 822 473 828 481L761 534L731 500H472C490 534 509 579 525 619H925C939 619 949 624 951 634C920 664 870 702 870 702L826 648H616C661 691 707 745 736 789C757 788 769 796 774 807L690 833C665 777 624 703 586 648H44L53 619H459C454 580 447 534 440 500H260L211 526ZM741 471V344H254V471ZM254 26V157H741V26ZM254 186V314H741V186Z"/><path transform="translate(427.2,217.3) scale(0.0132,-0.0132)" d="M556 468 475 477C473 207 484 42 45 -61L55 -80C521 19 516 187 523 443C546 445 554 456 556 468ZM544 151 535 136C646 87 817 -12 885 -72C958 -90 947 35 544 151ZM867 818 827 769H55L64 739H449C441 690 430 628 420 586H253L204 612V122H212C231 122 248 134 248 139V556H745V134H751C767 134 788 147 789 153V551C806 553 821 560 827 567L764 617L736 586H449C469 628 491 687 508 739H916C929 739 939 744 942 755C913 783 867 818 867 818Z"/></g>
</svg>
</body></html>
